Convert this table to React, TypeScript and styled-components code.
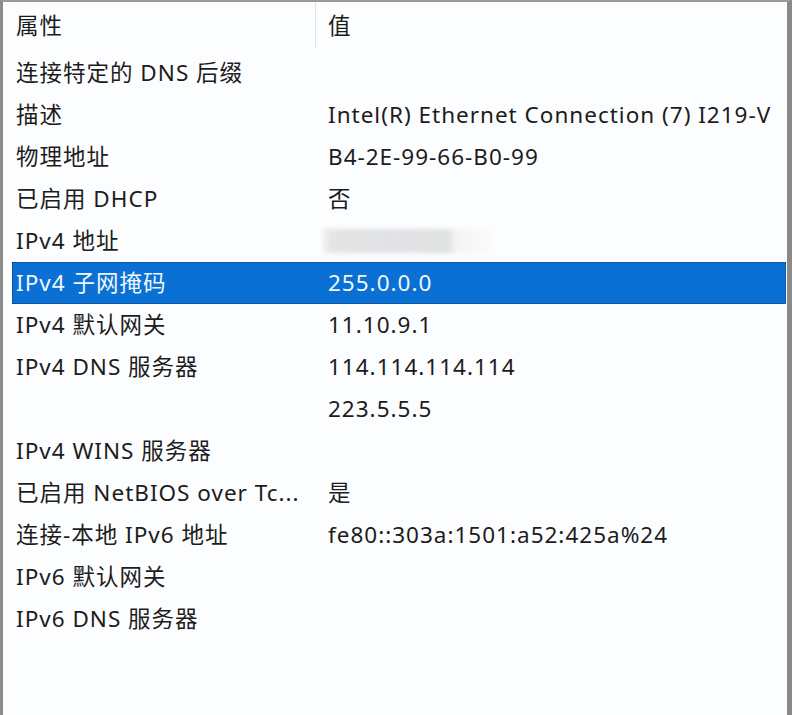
import React from "react";
import styled, { createGlobalStyle } from "styled-components";

const Global = createGlobalStyle`
  html, body { margin: 0; padding: 0; background: #fcfdfe; }
  body { font-family: "Noto Sans", "Noto Sans CJK SC", sans-serif; }
`;

const Frame = styled.div`
  width: 792px;
  height: 715px;
  box-sizing: border-box;
  border-top: 2px solid #9a9a9a;
  border-left: 3px solid #8c8c8c;
  border-right: 5px solid #8a8a8a;
  background: #fcfdfe;
  overflow: hidden;
  display: flex;
  flex-direction: column;
  padding-left: 9px;
`;

const Header = styled.div`
  height: 50px;
  display: grid;
  grid-template-columns: 303px 1fr;
  align-items: start;
`;

const HeaderCell = styled.div<{ $sep?: boolean }>`
  font-family: "Noto Sans CJK SC", sans-serif;
  font-size: 22.5px;
  letter-spacing: 1px;
  color: #1a1a1a;
  padding: 7px 0 0 ${(p) => (p.$sep ? "12px" : "4px")};
  height: 46px;
  box-sizing: border-box;
  border-left: ${(p) => (p.$sep ? "1px solid #e2e4e6" : "none")};
  line-height: 30px;
`;

const List = styled.div`
  display: flex;
  flex-direction: column;
  margin-right: 1px;
`;

const Row = styled.div<{ $selected?: boolean }>`
  height: 42px;
  display: grid;
  grid-template-columns: 300px 1fr;
  align-items: center;
  box-sizing: border-box;
  background: ${(p) => (p.$selected ? "#0a70d3" : "transparent")};
  outline: ${(p) => (p.$selected ? "1px dotted #0a3f7a" : "none")};
  outline-offset: -1px;
  color: ${(p) => (p.$selected ? "#eef6ff" : "#1c1c1c")};
`;

const Cell = styled.div<{ $value?: boolean }>`
  font-size: 22.5px;
  line-height: 30px;
  white-space: nowrap;
  overflow: hidden;
  padding-left: ${(p) => (p.$value ? "16px" : "4px")};
  letter-spacing: 1px;
`;

const Blur = styled.div`
  width: 168px;
  height: 24px;
  margin-left: 10px;
  background: linear-gradient(
    90deg,
    rgba(225, 226, 228, 0.4) 0%,
    rgba(224, 225, 227, 0.9) 6%,
    rgba(222, 223, 225, 0.95) 75%,
    rgba(238, 239, 240, 0.6) 80%,
    rgba(245, 246, 247, 0.3) 100%
  );
  filter: blur(2px);
`;

type Item = { k: string; v?: string; blur?: boolean; sel?: boolean };

const items: Item[] = [
  { k: "连接特定的 DNS 后缀" },
  { k: "描述", v: "Intel(R) Ethernet Connection (7) I219-V" },
  { k: "物理地址", v: "B4-2E-99-66-B0-99" },
  { k: "已启用 DHCP", v: "否" },
  { k: "IPv4 地址", blur: true },
  { k: "IPv4 子网掩码", v: "255.0.0.0", sel: true },
  { k: "IPv4 默认网关", v: "11.10.9.1" },
  { k: "IPv4 DNS 服务器", v: "114.114.114.114" },
  { k: "", v: "223.5.5.5" },
  { k: "IPv4 WINS 服务器" },
  { k: "已启用 NetBIOS over Tc...", v: "是" },
  { k: "连接-本地 IPv6 地址", v: "fe80::303a:1501:a52:425a%24" },
  { k: "IPv6 默认网关" },
  { k: "IPv6 DNS 服务器" },
];

export default function App() {
  return (
    <>
      <Global />
      <Frame>
        <Header>
          <HeaderCell>属性</HeaderCell>
          <HeaderCell $sep>值</HeaderCell>
        </Header>
        <List>
          {items.map((it, i) => (
            <Row key={i} $selected={it.sel}>
              <Cell>{it.k}</Cell>
              {it.blur ? <Blur /> : <Cell $value>{it.v ?? ""}</Cell>}
            </Row>
          ))}
        </List>
      </Frame>
    </>
  );
}
